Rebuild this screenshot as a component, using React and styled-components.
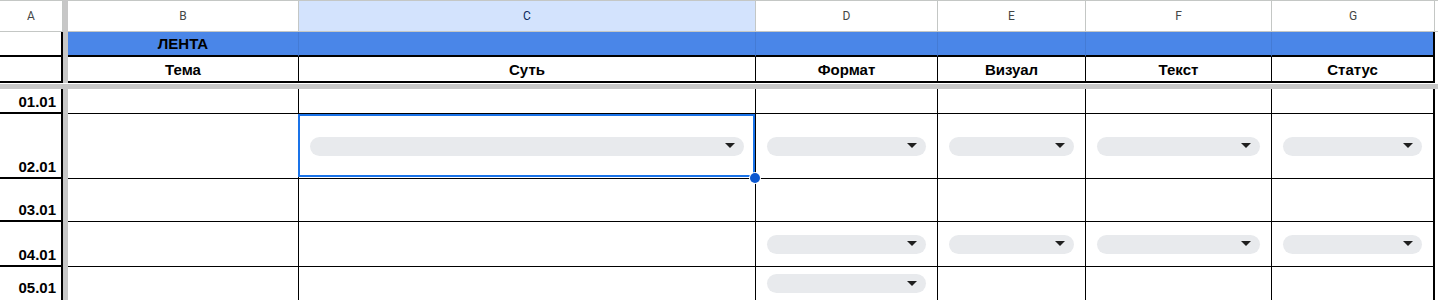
import styled, { createGlobalStyle } from "styled-components";

const GlobalStyle = createGlobalStyle`
  body {
    margin: 0;
    background: #fff;
    font-family: "Liberation Sans", Arial, sans-serif;
  }
`;

// widths of A, freeze bar, B..G and what is left of the window
const COLS = "63px 5px 231px 457px 182px 148px 186px 163px 1fr";
const ROWS = "32px 25px 26px 6px 25px 65px 43px 45px 33px";

const letters = ["B", "C", "D", "E", "F", "G"];
const titles = ["Тема", "Суть", "Формат", "Визуал", "Текст", "Статус"];

// which columns (B..G, 0-based) hold a dropdown in each row
const rows = [
  { label: "01.01", drops: [] },
  { label: "02.01", drops: [1, 2, 3, 4, 5], selected: 1 },
  { label: "03.01", drops: [] },
  { label: "04.01", drops: [2, 3, 4, 5] },
  { label: "05.01", drops: [2], end: true },
];

const App = () => {
  return (
    <>
      <GlobalStyle />
      <Sheet>
        <FreezeCol />
        <FreezeRow />

        <ColHead>A</ColHead>
        {letters.map((l, i) => (
          <ColHead key={l} $active={i === 1}>
            {l}
          </ColHead>
        ))}
        <ColHead $filler />

        <RowHeadCell />
        {letters.map((l, i) => (
          <BandCell key={l} $last={i === 5}>
            {i === 0 ? "ЛЕНТА" : ""}
          </BandCell>
        ))}
        <Filler />

        <RowHeadCell />
        {titles.map((t, i) => (
          <HeadCell key={t} $last={i === 5}>
            {t}
          </HeadCell>
        ))}
        <Filler />

        {rows.map((r) => (
          <Row key={r.label} row={r} />
        ))}
      </Sheet>
    </>
  );
};

const Row = ({ row }) => (
  <>
    <RowHeadCell $end={row.end}>{row.label}</RowHeadCell>
    {letters.map((l, i) => (
      <Cell key={l} $last={i === 5} $end={row.end} $selected={row.selected === i}>
        {row.drops.includes(i) && (
          <Chip>
            <Caret />
          </Chip>
        )}
        {row.selected === i && (
          <>
            <Selection />
            <Handle />
          </>
        )}
      </Cell>
    ))}
    <Filler />
  </>
);

export default App;

const Sheet = styled.div`
  display: grid;
  grid-template-columns: ${COLS};
  grid-template-rows: ${ROWS};
  width: 1438px;
  height: 300px;
  overflow: hidden;
  color: #000;
`;

const FreezeCol = styled.div`
  grid-column: 2;
  grid-row: 1 / -1;
  background: #c7c7c7;
`;

const FreezeRow = styled.div`
  grid-column: 1 / -1;
  grid-row: 4;
  background: #c7c7c7;
  border-top: 1px solid #fff;
`;

const ColHead = styled.div`
  display: flex;
  align-items: center;
  justify-content: center;
  box-sizing: border-box;
  border-top: 1px solid #c4c7c5;
  border-bottom: 1px solid #c4c7c5;
  border-right: ${(p) => (p.$filler ? "none" : "1px solid #c4c7c5")};
  background: ${(p) => (p.$active ? "#d3e3fd" : "#fff")};
  color: ${(p) => (p.$active ? "#0b2a5c" : "#444746")};
  font-family: Roboto, "Liberation Sans", sans-serif;
  font-size: 12px;
`;

const BandCell = styled.div`
  display: flex;
  align-items: center;
  justify-content: center;
  box-sizing: border-box;
  background: #4a86e8;
  border-right: ${(p) => (p.$last ? "2px solid #000" : "1px solid rgba(0, 0, 0, 0.08)")};
  border-bottom: 2px solid #000;
  font-weight: bold;
  font-size: 15px;
`;

const HeadCell = styled.div`
  display: flex;
  align-items: center;
  justify-content: center;
  box-sizing: border-box;
  border-right: ${(p) => (p.$last ? "2px" : "1px")} solid #000;
  border-bottom: 2px solid #000;
  font-weight: bold;
  font-size: 15px;
`;

const RowHeadCell = styled.div`
  display: flex;
  align-items: flex-end;
  justify-content: flex-end;
  box-sizing: border-box;
  padding: 0 5px ${(p) => (p.$end ? "4px" : "2px")} 0;
  border-right: 2px solid #000;
  border-bottom: ${(p) => (p.$end ? "none" : "2px solid #000")};
  font-weight: bold;
  font-size: 15px;
  line-height: 17px;
`;

const Cell = styled.div`
  position: relative;
  z-index: ${(p) => (p.$selected ? 2 : "auto")};
  display: flex;
  align-items: center;
  box-sizing: border-box;
  padding: 0 11px;
  border-right: ${(p) => (p.$last ? "2px" : "1px")} solid #000;
  border-bottom: ${(p) => (p.$end ? "none" : "1px solid #000")};
`;

const Filler = styled.div``;

const Chip = styled.div`
  flex: 1;
  display: flex;
  align-items: center;
  justify-content: flex-end;
  height: 19px;
  padding-right: 9px;
  border-radius: 10px;
  background: #e8eaed;
`;

const Caret = styled.span`
  width: 0;
  height: 0;
  margin-top: -1px;
  border-left: 5px solid transparent;
  border-right: 5px solid transparent;
  border-top: 5px solid #1f1f1f;
`;

const Selection = styled.div`
  position: absolute;
  left: -1px;
  top: 0;
  right: 0;
  bottom: 1px;
  border: 2px solid #1a73e8;
  pointer-events: none;
`;

const Handle = styled.div`
  position: absolute;
  top: 59px;
  right: -5px;
  width: 10px;
  height: 10px;
  box-sizing: border-box;
  border-radius: 50%;
  background: #0b57d0;
  box-shadow: 0 0 0 1px #fff;
`;
